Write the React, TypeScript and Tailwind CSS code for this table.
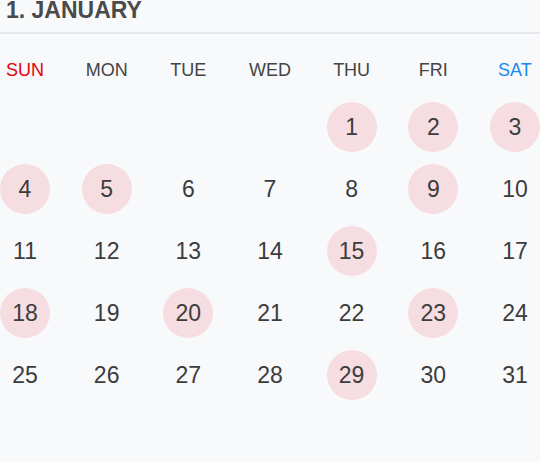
const weekdays = ['SUN', 'MON', 'TUE', 'WED', 'THU', 'FRI', 'SAT'];
const marked = [1, 2, 3, 4, 5, 9, 15, 18, 20, 23, 29];

// January starts on Thursday
const cells: (number | null)[] = [
  null, null, null, null,
  ...Array.from({ length: 31 }, (_, i) => i + 1),
];

export default function App() {
  return (
    <div
      className="w-[540px] h-[462px] bg-[#f8f9fb] overflow-hidden"
      style={{ fontFamily: '"Liberation Sans", Arial, sans-serif' }}
    >
      <div className="flex items-start h-[34px] border-b-2 border-[#e4e6ea] px-[6px]">
        <h1 className="text-[23px] leading-[21px] font-bold text-[#4a4a4a]">1. JANUARY</h1>
      </div>

      <div className="mt-[26px] grid grid-cols-[repeat(7,50px)] justify-between">
        {weekdays.map((d, i) => (
          <div
            key={d}
            className={`h-5 text-center text-[18px] leading-5 ${
              i === 0 ? 'text-[#e8000b]' : i === 6 ? 'text-[#1a88f0]' : 'text-[#444]'
            }`}
          >
            {d}
          </div>
        ))}
      </div>

      <div className="mt-[22px] grid grid-cols-[repeat(7,50px)] justify-between gap-y-3">
        {cells.map((n, i) => (
          <div
            key={i}
            className={`w-[50px] h-[50px] rounded-full flex items-center justify-center text-[23px] text-[#3c3c3c] ${
              n && marked.includes(n) ? 'bg-[#f6dde1]' : ''
            }`}
          >
            {n}
          </div>
        ))}
      </div>
    </div>
  );
}
